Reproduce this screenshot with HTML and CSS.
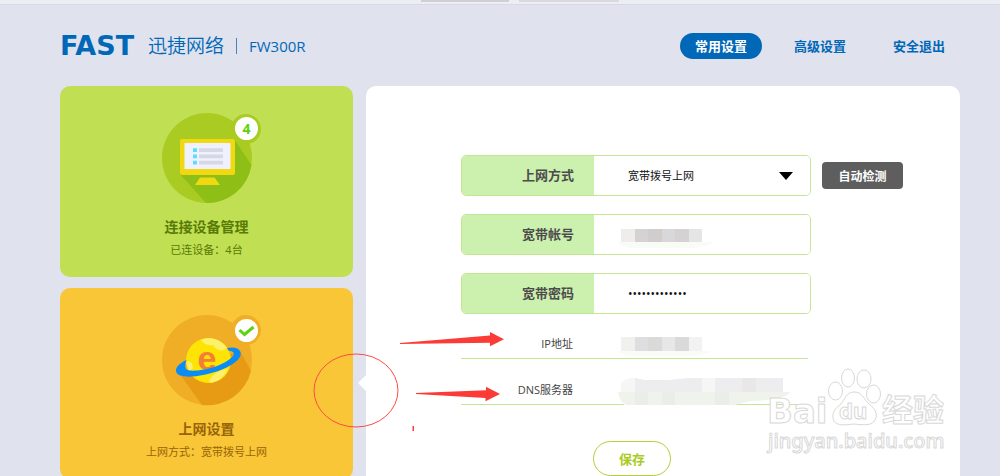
FILE: index.html
```html
<!DOCTYPE html>
<html lang="zh-CN">
  <head>
    <meta charset="utf-8">
    <title>FAST FW300R</title>
    <link rel="stylesheet" href="styles.css">
  </head>
  <body>
    <div class="topbar"><span class="tab"></span><span class="tab tab-wide"></span></div>
    <header class="header">
      <div class="brand">
        <span class="logo">FAST</span>
        <span class="brand-name">迅捷网络</span>
        <span class="model">FW300R</span>
      </div>
      <nav class="nav">
        <a href="#" class="active">常用设置</a>
        <a href="#">高级设置</a>
        <a href="#">安全退出</a>
      </nav>
    </header>

    <main class="main">
      <div class="cards">
        <section class="card card-green">
          <svg class="card-icon" width="90" height="90" viewBox="0 0 90 90">
            <circle cx="45" cy="45" r="45" fill="#a9cb22"/>
            <path d="M72 26 L89.500 52 A45 45 0 0 1 44 90 L18 61 Z" fill="#8dbf17"/>
            <circle cx="84" cy="16" r="15" fill="#a9cb22"/>
            <rect x="18" y="26" width="55" height="36" rx="2" fill="#f0d913"/>
            <rect x="22.500" y="30" width="46" height="26" fill="#f0f1ff"/>
            <path d="M31 35.200h4v3.800h-4zM31 41.400h4v3.800h-4zM31 47.800h4v3.800h-4z" fill="#5cdcff"/>
            <path d="M37 35.200h24v3.800h-24zM37 41.400h24v3.800h-24zM37 47.800h24v3.800h-24z" fill="#d6d8e6"/>
            <path d="M38 64.500h14.500L58 72H33z" fill="#f0d913"/>
            <circle cx="84.500" cy="15.500" r="11.500" fill="#fff"/>
            <text x="84.500" y="21" class="badge-count">4</text>
          </svg>
          <h2>连接设备管理</h2>
          <p>已连设备：4台</p>
        </section>
        <section class="card card-orange">
          <svg class="card-icon" width="90" height="90" viewBox="0 0 90 90">
            <circle cx="45" cy="45" r="45" fill="#f0ae27"/>
            <path d="M78 36 L89 56 A45 45 0 0 1 40 90 L17 58 Z" fill="#e79b14"/>
            <circle cx="84" cy="15" r="15" fill="#f0ae27"/>
            <circle cx="46.500" cy="45.500" r="22.500" fill="#fde404"/>
            <path d="M39 24.500 Q42 31 51 30 Q55 37 62 35 L65 33 Q58 23 46 23 Z M47 66 Q49 60 60 55 L66 54 Q60 66 49 68 Z M24 47 Q30 44 31 53 L27 56 Z" fill="#fdf06a"/>
            <text x="45" y="55" class="planet-letter">e</text>
            <path d="M24.500 45 C16 49 12 54 15 58.500 C20 64 41 62 60 54.500 C75 48.500 81 41 78 36 C76 32 70 32 65 33 L67 36 C71 36 73 38 71 41 C66 47 55 52 42 54.500 C31 56.500 24 56 23.500 53 C23 51 23.500 48 24.500 45 Z" fill="#0a8cf7"/>
            <circle cx="84.500" cy="15.500" r="11.500" fill="#fff"/>
            <path d="M77.500 15 L82.500 19.500 L91.500 12" fill="none" stroke="#5fd20d" stroke-width="3"/>
          </svg>
          <h2>上网设置</h2>
          <p>上网方式：宽带拨号上网</p>
        </section>
      </div>

      <form class="panel">
        <div class="line">
          <div class="field">
            <label for="mode">上网方式</label>
            <select id="mode"><option>宽带拨号上网</option></select>
            <svg class="arrow" width="14" height="8"><path d="M0 0h14L7 8z"/></svg>
          </div>
          <button type="button" class="detect">自动检测</button>
        </div>
        <div class="field">
          <label for="account">宽带帐号</label>
          <input id="account" type="text">
          <svg class="mask" width="95" height="22">
            <path d="M0 14h95q-5 6-25 6H18q-15 0-18-6z" fill="#f9fcf6"/>
            <path d="M3 1h14v13H3z" fill="#eeedec"/>
            <path d="M17 1h13v13H17zM57 1h14v13H57z" fill="#d5d2d3"/>
            <path d="M30 1h14v13H30z" fill="#d2cdcd"/>
            <path d="M44 1h13v13H44z" fill="#d8d8da"/>
            <path d="M71 1h13v13H71z" fill="#e6e5e6"/>
          </svg>
        </div>
        <div class="field">
          <label for="password">宽带密码</label>
          <input id="password" type="password" value="1234567890123">
        </div>
        <div class="info">
          <span class="info-label">IP地址</span>
          <svg class="mask" width="95" height="22">
            <path d="M0 14h92q-5 5-25 5H18q-15 0-18-5z" fill="#f9fcf6"/>
            <path d="M3 0h14v14H3z" fill="#f0f0ef"/>
            <path d="M17 0h13v14H17z" fill="#dedee0"/>
            <path d="M30 0h14v14H30zM57 0h14v14H57z" fill="#dadadb"/>
            <path d="M44 0h13v14H44z" fill="#e7e7e8"/>
            <path d="M71 0h13v14H71z" fill="#f2f2f2"/>
          </svg>
        </div>
        <div class="info">
          <span class="info-label">DNS服务器</span>
          <svg class="mask mask-dns" width="174" height="30">
            <path d="M6 25h112v5H6z" fill="#fff"/>
            <path d="M3 14V6q2-5 14-6l10 2h24l19-2h95v14z" fill="#ededef"/>
            <path d="M3 14V6q2-5 14-6v14zM84 0h13v14H84z" fill="#f6f6f7"/>
            <path d="M124 0h14v14h-14z" fill="#eae7e9"/>
            <path d="M0 14h172q-4 8-40 9l-15 4H8q-7-4-8-13z" fill="#f0f3ec"/>
            <path d="M17 14h13v13H17zM44 14h13v13H44zM97 14h14v13H97z" fill="#ebeee8"/>
          </svg>
        </div>
        <button type="submit" class="save">保存</button>

        <svg class="watermark" width="184" height="90" viewBox="0 0 184 90">
          <text x="1" y="58" class="wm-big">Bai</text>
          <ellipse cx="69.500" cy="26" rx="7" ry="9"/>
          <ellipse cx="82" cy="13" rx="6.500" ry="9"/>
          <ellipse cx="98" cy="14" rx="7" ry="9"/>
          <ellipse cx="107.500" cy="29" rx="7" ry="9"/>
          <path d="M88 27 C96 27 97 33 103 39 C110 44 112 50 109 55 C106 61 98 60 88 59 C79 60 71 61 68 56 C65 50 68 44 74 40 C79 35 80 27 88 27 Z"/>
          <text x="73" y="54" class="wm-du">du</text>
          <text x="116" y="56" class="wm-cjk">经验</text>
          <text x="2" y="83" class="wm-url">jingyan.baidu.com</text>
        </svg>
      </form>

      <!-- hand-drawn marks over the page -->
      <svg class="marks" width="210" height="110" viewBox="300 330 210 110">
        <ellipse cx="356" cy="390.500" rx="42" ry="36.500" fill="none" stroke="#ff4a42" stroke-width="1"/>
        <path d="M400 343 L490 335.500 V332 L504 339.300 L490 346.300 V342.700 L400 344 Z"/>
        <path d="M416 393 L486 390.300 V386.700 L500 394 L485.500 401.300 V398 L416 394 Z"/>
        <path d="M412.500 426h1.500v5h-1.500z"/>
      </svg>
    </main>
  </body>
</html>
```

FILE: styles.css
```css
* {
  box-sizing: border-box;
}
html {
  scrollbar-width: none;
}
body {
  margin: 0;
  background: #e0e2ee;
  font-family: "Open Sans", "Noto Sans CJK SC", sans-serif;
  font-size: 11px;
}
.topbar {
  display: flex;
  justify-content: center;
  gap: 10px;
  height: 5px;
  padding-left: 40px;
  background: #eceef4;
  border-bottom: 1px solid #d5dbe6;
}
.tab {
  width: 88px;
  height: 2px;
  background: #cfcfd4;
}
.tab-wide {
  width: 100px;
  background: #d9d9de;
}
.header {
  display: flex;
  align-items: center;
  justify-content: space-between;
  height: 81px;
  padding: 0 40px 0 60px;
  color: #0168b7;
}
.brand {
  display: flex;
  align-items: center;
}
.logo {
  width: 88px;
  font: bold 27px/24px "DejaVu Sans", sans-serif;
}
.brand-name {
  font-size: 19px;
  font-weight: 350;
  line-height: 24px;
}
.model {
  margin-left: 12px;
  padding-left: 12px;
  border-left: 1px solid #3f87c3;
  font-size: 15px;
  line-height: 16px;
}
.nav {
  display: flex;
  gap: 17px;
}
.nav a {
  padding: 0 15px;
  border-radius: 13px;
  color: #0168b7;
  font-size: 13px;
  font-weight: bold;
  line-height: 26px;
  text-decoration: none;
}
.nav .active {
  background: #0168b7;
  color: #fff;
}

.main {
  position: relative;
  display: grid;
  grid-template-columns: 293px 1fr;
  gap: 13px;
  padding: 0 40px 0 60px;
}
.cards {
  display: flex;
  flex-direction: column;
  gap: 11px;
}
.card {
  padding: 27px 0 16px;
  border-radius: 10px;
  text-align: center;
}
.card-green {
  background: #c0df52;
  color: #587a06;
}
.card-orange {
  background: #f9c638;
  color: #986408;
}
.card-icon {
  display: block;
  margin: 0 auto 12px;
  overflow: visible;
}
.card h2 {
  margin: 0;
  font-size: 14px;
  line-height: 24px;
}
.card p {
  margin: 0;
  line-height: 22px;
}
.badge-count {
  fill: #5fd20d;
  font-size: 14px;
  font-weight: bold;
  text-anchor: middle;
}
.planet-letter {
  fill: #f57d35;
  font: bold 34px "Liberation Sans", sans-serif;
  text-anchor: middle;
}

.panel {
  position: relative;
  padding: 69px 0 0 95px;
  background: #fff;
  border-radius: 10px 10px 0 0;
}
.panel::before {
  content: "";
  position: absolute;
  left: -8px;
  top: 289px;
  border: 8px solid transparent;
  border-left: 0;
  border-right-color: #fff;
}
.line {
  display: flex;
  align-items: center;
  gap: 11px;
}
.field {
  position: relative;
  display: flex;
  width: 350px;
  height: 41px;
  border: 1px solid #c5e594;
  border-radius: 5px;
  overflow: hidden;
}
.line + .field,
.field + .field {
  margin-top: 18px;
}
.field label {
  width: 132px;
  padding-right: 20px;
  background: #ccf0ae;
  color: #4c4c4c;
  font-size: 13px;
  font-weight: bold;
  line-height: 39px;
  text-align: right;
}
.field input,
.field select {
  flex: 1;
  min-width: 0;
  padding: 0 34px;
  border: 0;
  outline: 0;
  appearance: none;
  background: #fff;
  color: #111;
  font-family: inherit;
  font-size: 11px;
}
.field input {
  font-size: 12px;
}
.arrow {
  position: absolute;
  right: 17px;
  top: 16px;
}
.mask {
  position: absolute;
  left: 156px;
  top: 13px;
}
.detect {
  width: 81px;
  height: 27px;
  padding: 0;
  border: 0;
  border-radius: 4px;
  background: #5e5e5e;
  color: #fff;
  font-family: inherit;
  font-size: 12px;
  font-weight: bold;
}
.info {
  position: relative;
  width: 347px;
  padding-top: 16px;
  border-bottom: 1px solid #c1e794;
}
.info + .info {
  padding-top: 17px;
}
.info-label {
  display: block;
  width: 112px;
  color: #444;
  line-height: 28px;
  text-align: right;
}
.info .mask {
  left: 157px;
  top: 23px;
}
.info .mask-dns {
  top: 19px;
}
.save {
  display: block;
  width: 78px;
  height: 35px;
  margin: 36px 0 0 132px;
  padding: 0;
  border: 1px solid #b2cf3c;
  border-radius: 18px;
  background: #fff;
  color: #a9cb22;
  font-family: inherit;
  font-size: 13px;
  font-weight: bold;
}

.marks {
  position: absolute;
  left: 300px;
  top: 244px;
  fill: #fb3b36;
  pointer-events: none;
}
.watermark {
  position: absolute;
  right: 10px;
  top: 279px;
  fill: #fff;
  stroke: #d8d8d8;
  stroke-width: 1px;
  font-family: "Noto Sans", "Noto Sans CJK SC", sans-serif;
  font-weight: bold;
  pointer-events: none;
}
.wm-big {
  font-family: "DejaVu Sans", sans-serif;
  font-size: 34px;
}
.wm-du {
  font-size: 22px;
}
.wm-cjk {
  font-size: 31px;
}
.wm-url {
  font-size: 20px;
  font-weight: 500;
}
```
